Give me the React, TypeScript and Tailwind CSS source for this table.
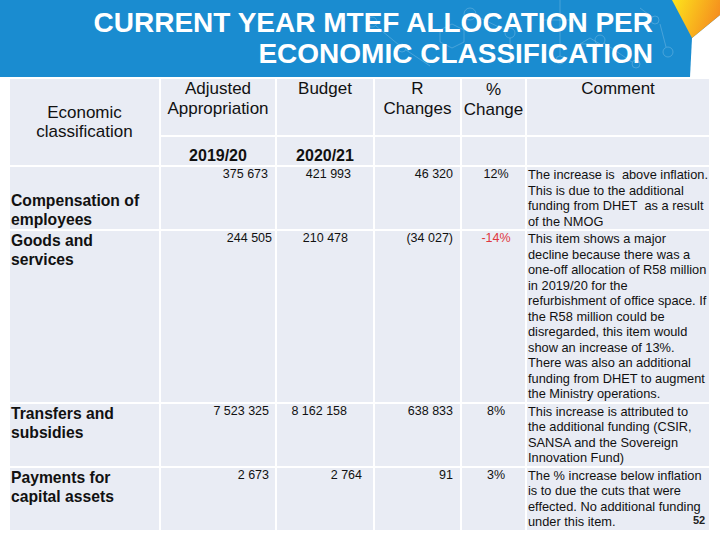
const cellBg = "bg-[#e9ecf4]";

type Row = {
  label: string[];
  labelBottom?: boolean;
  adjusted: string;
  adjustedPad: string;
  budget: string;
  budgetPad: string;
  change: string;
  pct: string;
  negative?: boolean;
  comment: string[];
};

const rows: Row[] = [
  {
    label: ["Compensation of", "employees"],
    labelBottom: true,
    adjusted: "375 673",
    adjustedPad: "pr-[7px]",
    budget: "421 993",
    budgetPad: "pr-[22px]",
    change: "46 320",
    pct: "12%",
    comment: [
      "The increase is  above inflation.",
      "This is due to the additional",
      "funding from DHET  as a result",
      "of the NMOG",
    ],
  },
  {
    label: ["Goods and", "services"],
    adjusted: "244 505",
    adjustedPad: "pr-[3px]",
    budget: "210 478",
    budgetPad: "pr-[25px]",
    change: "(34 027)",
    pct: "-14%",
    negative: true,
    comment: [
      "This item shows a major",
      "decline because there was a",
      "one-off allocation of R58 million",
      "in 2019/20 for the",
      "refurbishment of office space. If",
      "the R58 million could be",
      "disregarded, this item would",
      "show an increase of 13%.",
      "There was also an additional",
      "funding from DHET to augment",
      "the Ministry operations.",
    ],
  },
  {
    label: ["Transfers and", "subsidies"],
    adjusted: "7 523 325",
    adjustedPad: "pr-[6px]",
    budget: "8 162 158",
    budgetPad: "pr-[26px]",
    change: "638 833",
    pct: "8%",
    comment: [
      "This increase is attributed to",
      "the additional funding (CSIR,",
      "SANSA and the Sovereign",
      "Innovation Fund)",
    ],
  },
  {
    label: ["Payments for", "capital assets"],
    adjusted: "2 673",
    adjustedPad: "pr-[6px]",
    budget: "2 764",
    budgetPad: "pr-[11px]",
    change: "91",
    pct: "3%",
    comment: [
      "The % increase below inflation",
      "is to due the cuts that were",
      "effected. No additional funding",
      "under this item.",
    ],
  },
];

function Lines({ lines }: { lines: string[] }) {
  return (
    <>
      {lines.map((l, i) => (
        <div key={i}>{l}</div>
      ))}
    </>
  );
}

export default function App() {
  return (
    <div className="relative h-[539px] w-[720px] overflow-hidden bg-white font-['Liberation_Sans',Arial,sans-serif] text-[#111]">
      {/* Title band */}
      <header className="relative h-[77px] bg-[#1a8cd0]">
        <svg className="absolute inset-0" width="720" height="77" viewBox="0 0 720 77" fill="none">
          <g stroke="#ffffff" strokeOpacity="0.2" strokeWidth="1">
            <circle cx="372" cy="22" r="5" />
            <circle cx="402" cy="48" r="4" />
            <line x1="376" y1="26" x2="399" y2="45" />
            <line x1="406" y1="50" x2="430" y2="66" />
            <circle cx="470" cy="14" r="6" />
            <line x1="476" y1="16" x2="505" y2="30" />
            <circle cx="510" cy="33" r="5" />
            <line x1="510" y1="38" x2="510" y2="64" />
            <circle cx="560" cy="60" r="4" />
            <line x1="540" y1="20" x2="580" y2="20" />
            <line x1="560" y1="0" x2="560" y2="56" />
            <circle cx="600" cy="40" r="5" />
            <line x1="604" y1="43" x2="632" y2="62" />
            <circle cx="636" cy="64" r="4" />
            <circle cx="655" cy="20" r="4" />
            <line x1="640" y1="8" x2="652" y2="17" />
            <circle cx="668" cy="52" r="5" />
            <line x1="660" y1="24" x2="666" y2="47" />
            <polygon points="440,30 452,24 464,30 464,42 452,48 440,42" />
            <polygon points="580,44 590,38 600,44" />
          </g>
        </svg>
        <h1 className="relative pr-[67px] pt-[7px] text-right text-[28px] font-bold leading-[31px] text-white">
          CURRENT YEAR MTEF ALLOCATION PER
          <br />
          ECONOMIC CLASSIFICATION
        </h1>
        <svg className="absolute right-0 top-0" width="50" height="77" viewBox="0 0 50 77">
          <defs>
            <linearGradient id="tri" x1="0" y1="0" x2="1" y2="0.3">
              <stop offset="0" stopColor="#fde51c" />
              <stop offset="1" stopColor="#f5901e" />
            </linearGradient>
          </defs>
          <polygon points="50,15 22,38 20,77 50,77" fill="#ffffff" />
          <polygon points="2,0 50,0 50,15 22,38" fill="url(#tri)" />
        </svg>
      </header>

      {/* Table */}
      <div className="ml-[10px] mt-[2px] grid w-[699px] grid-cols-[149px_114px_96px_85px_63px_182px] gap-[2px]">
        {/* header row 1 */}
        <div className={`${cellBg} row-span-2 flex items-center justify-center text-center text-[17px] leading-[19.5px]`}>
          <div>
            Economic
            <br />
            classification
          </div>
        </div>
        <div className={`${cellBg} h-[56px] text-center text-[17px] leading-[19.5px]`}>
          Adjusted
          <br />
          Appropriation
        </div>
        <div className={`${cellBg} text-center text-[17px] leading-[19.5px]`}>Budget</div>
        <div className={`${cellBg} text-center text-[17px] leading-[19.5px]`}>
          R
          <br />
          Changes
        </div>
        <div className={`${cellBg} pt-[1px] text-center text-[17px] leading-[19.5px]`}>
          %
          <br />
          Change
        </div>
        <div className={`${cellBg} text-center text-[17px] leading-[19.5px]`}>Comment</div>

        {/* header row 2 */}
        <div className={`${cellBg} flex h-[28px] items-end justify-center text-[16px] font-bold leading-[19px]`}>2019/20</div>
        <div className={`${cellBg} flex items-end justify-center text-[16px] font-bold leading-[19px]`}>2020/21</div>
        <div className={cellBg} />
        <div className={cellBg} />
        <div className={cellBg} />

        {rows.map((r) => (
          <div key={r.label[0]} className="contents">
            <div
              className={`${cellBg} pl-[1px] text-[15.7px] font-bold leading-[19px] ${
                r.labelBottom ? "flex flex-col justify-end" : ""
              }`}
            >
              <Lines lines={r.label} />
            </div>
            <div className={`${cellBg} ${r.adjustedPad} text-right text-[12.5px] leading-[15.5px]`}>{r.adjusted}</div>
            <div className={`${cellBg} ${r.budgetPad} text-right text-[12.5px] leading-[15.5px]`}>{r.budget}</div>
            <div className={`${cellBg} pr-[7px] text-right text-[12.5px] leading-[15.5px]`}>{r.change}</div>
            <div
              className={`${cellBg} pl-[5px] text-center text-[12.5px] leading-[15.5px] ${
                r.negative ? "text-[#e0363f]" : ""
              }`}
            >
              {r.pct}
            </div>
            <div className={`${cellBg} whitespace-pre pl-[1px] text-[12.8px] leading-[15.5px]`}>
              <Lines lines={r.comment} />
            </div>
          </div>
        ))}
      </div>

      <span className="absolute left-[693px] top-[514px] text-[11px] font-bold leading-[12px] text-[#222]">52</span>
    </div>
  );
}
